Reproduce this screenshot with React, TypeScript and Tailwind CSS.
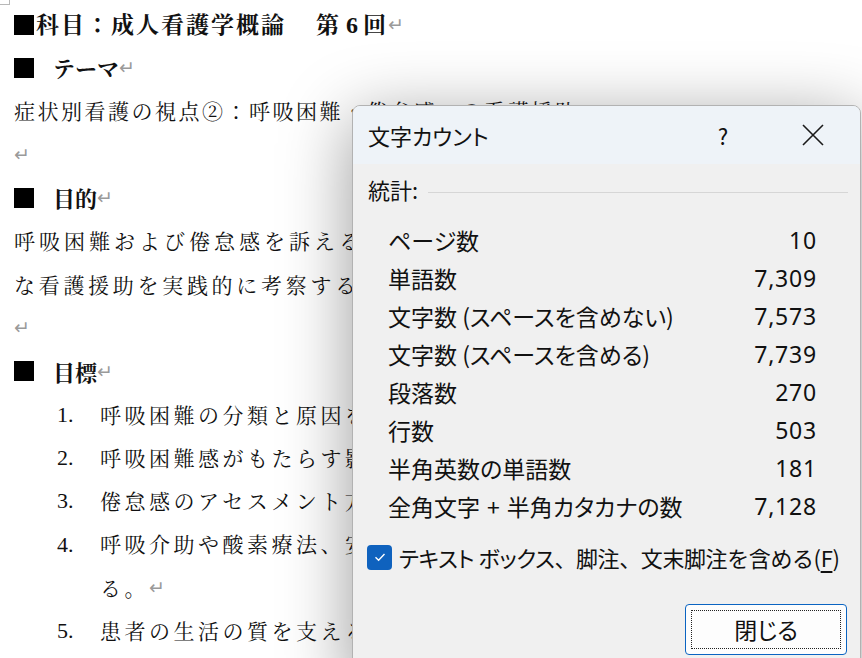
import React from "react";

const RET = () => (
  <span className="font-['DejaVu_Sans',sans-serif] text-[19px] font-normal text-[#9a9a9a] tracking-normal leading-none">↵</span>
);

const SQ = () => (
  <span className="inline-block w-[20px] h-[20px] bg-black mr-[3px]" />
);

const rows: [React.ReactNode, string][] = [
  ["ページ数", "10"],
  ["単語数", "7,309"],
  ["文字数 (スペースを含めない)", "7,573"],
  ["文字数 (スペースを含める)", "7,739"],
  ["段落数", "270"],
  ["行数", "503"],
  ["半角英数の単語数", "181"],
  [
    <>
      全角文字<span className="mx-[7px]">+</span>半角カタカナの数
    </>,
    "7,128",
  ],
];

const list: [string, string][] = [
  ["1.", "呼吸困難の分類と原因を"],
  ["2.", "呼吸困難感がもたらす影"],
  ["3.", "倦怠感のアセスメント方"],
  ["4.", "呼吸介助や酸素療法、安"],
];

export default function App() {
  const doc = "font-['Noto_Serif_CJK_JP','Noto_Sans_CJK_JP',serif] text-[#111]";
  const clip = "w-[345px] overflow-hidden";
  return (
    <div className="relative w-[862px] h-[658px] overflow-hidden bg-white">
      {/* page corner mark */}
      <div className="absolute left-0 top-0 w-[10px] h-[5px] border-r border-b border-[#b8b8b8]" />

      {/* document */}
      <div className={`${doc} pt-[3px] pl-[14px] flex flex-col whitespace-nowrap`}>
        <div className="h-[43.3px] flex items-center text-[23px] font-bold tracking-[2px]">
          <SQ />
          <span className="ml-[-1px]">科目：成人看護学概論　</span>
          <span className="ml-[5px]">第</span>
          <span className="font-['Liberation_Serif',serif] text-[24px] mx-[5px] tracking-normal">6</span>
          <span>回</span>
          <RET />
        </div>
        <div className="h-[43.3px] flex items-center text-[22px] font-bold">
          <SQ />
          <span className="ml-[16px]">テーマ</span>
          <RET />
        </div>
        <div className="h-[43.3px] flex items-center text-[21px] tracking-[2.5px]">
          症状別看護の視点②：呼吸困難・倦怠感への看護援助
        </div>
        <div className="h-[43.3px] flex items-center">
          <RET />
        </div>
        <div className="h-[43.3px] flex items-center text-[22px] font-bold">
          <SQ />
          <span className="ml-[16px]">目的</span>
          <RET />
        </div>
        <div className={`h-[43.3px] flex items-center text-[21px] tracking-[4px] ${clip}`}>
          呼吸困難および倦怠感を訴える
        </div>
        <div className={`h-[43.3px] flex items-center text-[21px] tracking-[3.7px] ${clip}`}>
          な看護援助を実践的に考察する
        </div>
        <div className="h-[43.3px] flex items-center">
          <RET />
        </div>
        <div className="h-[43.3px] flex items-center text-[22px] font-bold">
          <SQ />
          <span className="ml-[16px]">目標</span>
          <RET />
        </div>
        {list.map(([n, t]) => (
          <div key={n} className={`h-[43.3px] flex items-center text-[21px] pl-[43px] ${clip}`}>
            <span className="w-[43px] shrink-0 font-['Liberation_Serif',serif] text-[22px]">{n}</span>
            <span className="tracking-[3.5px]">{t}</span>
          </div>
        ))}
        <div className="h-[43.3px] flex items-center text-[21px] pl-[86px]">
          <span className="tracking-[3.5px]">る。</span>
          <RET />
        </div>
        <div className={`h-[43.3px] flex items-center text-[21px] pl-[43px] ${clip}`}>
          <span className="w-[43px] shrink-0 font-['Liberation_Serif',serif] text-[22px]">5.</span>
          <span className="tracking-[3.5px]">患者の生活の質を支える</span>
        </div>
      </div>

      {/* dialog */}
      <div className="absolute left-[352px] top-[105px] w-[509px] h-[580px] rounded-t-[8px] border border-[#b2b2b2] bg-[#f0f0f0] overflow-hidden shadow-[0_14px_70px_rgba(0,0,0,0.4)] font-['Noto_Sans_CJK_JP',sans-serif] [font-feature-settings:'palt'] text-[#111]">
        <div className="h-[58px] bg-[#eef3f8] flex items-center">
          <div className="flex-1 pl-[15px] text-[22px]">文字カウント</div>
          <div className="w-[40px] text-center text-[22px] mr-[50px]">?</div>
          <div className="w-[40px] flex justify-center mr-[27px]">
            <svg width="22" height="22" viewBox="0 0 22 22" fill="none" stroke="#1a1a1a" strokeWidth="1.6">
              <path d="M1 1L21 21M21 1L1 21" />
            </svg>
          </div>
        </div>

        <div className="mt-[10px] h-[30px] flex items-center pl-[15px] pr-[12px]">
          <span className="text-[22px]">統計:</span>
          <div className="flex-1 h-px bg-[#d6d6d6] ml-[10px] mt-[6px]" />
        </div>

        <div className="mt-[17px] ml-[35px] w-[429px] flex flex-col">
          {rows.map(([l, v], i) => (
            <div key={i} className="h-[38px] flex items-center justify-between">
              <span className="text-[23px]">{l}</span>
              <span className="font-['Noto_Sans','Noto_Sans_CJK_JP',sans-serif] text-[23px] tracking-[0.8px]">{v}</span>
            </div>
          ))}
        </div>

        <div className="mt-[17px] h-[30px] flex items-center pl-[14px]">
          <div className="w-[25px] h-[25px] rounded-[4px] bg-[#0f62be] flex items-center justify-center">
            <svg width="16" height="16" viewBox="0 0 16 16" fill="none" stroke="white" strokeWidth="1.4">
              <path d="M3.5 8.3L6.6 11.2L12.5 5" />
            </svg>
          </div>
          <span className="ml-[7px] text-[22px] [font-feature-settings:normal] tracking-[-0.4px]">
            <span className="[font-feature-settings:'palt']">テキスト ボックス</span>、脚注、文末脚注を含める(<span className="underline underline-offset-[4px]">F</span>)
          </span>
        </div>

        <div className="mt-[32px] flex justify-end pr-[13px]">
          <div className="w-[162px] h-[51px] rounded-[4px] border border-[#0a64c2] bg-[#fdfdfd] p-[5px]">
            <div className="w-full h-full border border-dotted border-[#222] flex items-center justify-center text-[23px]">
              閉じる
            </div>
          </div>
        </div>
      </div>
    </div>
  );
}
